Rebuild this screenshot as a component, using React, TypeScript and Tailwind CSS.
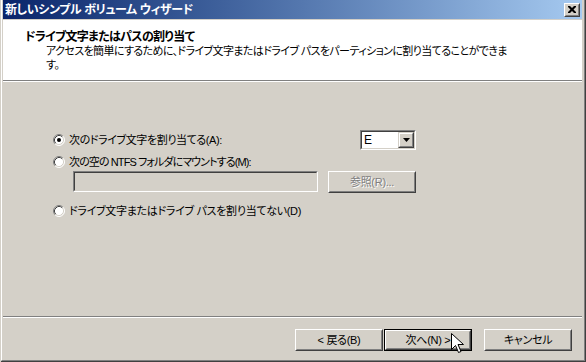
import React from "react";

const font = "font-['Liberation_Sans','Noto_Sans_CJK_JP',sans-serif] [font-feature-settings:'palt']";

function Radio({ checked }: { checked?: boolean }) {
  return (
    <svg width="12" height="12" viewBox="0 0 12 12" className="shrink-0">
      <circle cx="6" cy="6" r="5" fill="#fff" />
      <path d="M2.11 9.89 A5.5 5.5 0 0 1 9.89 2.11" fill="none" stroke="#808080" strokeWidth="1" />
      <path d="M9.89 2.11 A5.5 5.5 0 0 1 2.11 9.89" fill="none" stroke="#fff" strokeWidth="1" />
      <path d="M2.82 9.18 A4.5 4.5 0 0 1 9.18 2.82" fill="none" stroke="#404040" strokeWidth="1" />
      <path d="M9.18 2.82 A4.5 4.5 0 0 1 2.82 9.18" fill="none" stroke="#D4D0C8" strokeWidth="1" />
      {checked && <circle cx="6" cy="6" r="2" fill="#000" />}
    </svg>
  );
}

// classic raised button
function Button({ children, isDefault, disabled }: { children: React.ReactNode; isDefault?: boolean; disabled?: boolean }) {
  const inner = (
    <div className="h-full w-full border border-t-white border-l-white border-r-[#404040] border-b-[#404040]">
      <div className="flex h-full w-full items-center justify-center border border-t-[#D4D0C8] border-l-[#D4D0C8] border-r-[#808080] border-b-[#808080] bg-[#D4D0C8] text-[11px] leading-none tracking-[-0.3px]">
        {disabled ? (
          <span className="text-[#808080] [text-shadow:1px_1px_0_#fff]">{children}</span>
        ) : (
          <span className="text-black">{children}</span>
        )}
      </div>
    </div>
  );
  if (isDefault) {
    return <div className="h-[22px] w-[88px] border border-black">{inner}</div>;
  }
  return <div className="h-[22px] w-[88px]">{inner}</div>;
}

function Sunken({ className, children }: { className: string; children?: React.ReactNode }) {
  return (
    <div className={`border border-t-[#808080] border-l-[#808080] border-r-white border-b-white ${className}`}>
      <div className="h-full w-full border border-t-[#404040] border-l-[#404040] border-r-[#D4D0C8] border-b-[#D4D0C8]">
        {children}
      </div>
    </div>
  );
}

export default function App() {
  return (
    <div className={`relative h-[362px] w-[586px] overflow-hidden bg-[#D4D0C8] pl-px ${font} text-black`}>
      <div className="h-full w-full border-r border-b border-[#404040]">
        <div className="flex h-full w-full flex-col border-l border-l-white border-r border-b border-r-[#808080] border-b-[#808080] pl-px pr-[2px] pb-px">
          {/* title bar */}
          <div className="flex h-[19px] shrink-0 items-center justify-between bg-linear-to-r from-[#0A246A] to-[#A6CAF0] pl-[2px] pr-[2px]">
            <span className="text-[12px] font-bold leading-none tracking-[-0.4px] text-white">新しいシンプル ボリューム ウィザード</span>
            <div className="h-[14px] w-[16px] border border-t-white border-l-white border-r-[#404040] border-b-[#404040]">
              <div className="flex h-full w-full items-center justify-center border border-t-[#D4D0C8] border-l-[#D4D0C8] border-r-[#808080] border-b-[#808080] bg-[#D4D0C8]">
                <svg width="8" height="7" viewBox="0 0 8 7">
                  <path d="M0 0h2l2 2 2-2h2v1l-2.5 2.5L8 6v1H6L4 5 2 7H0V6l2.5-2.5L0 1z" fill="#000" />
                </svg>
              </div>
            </div>
          </div>
          <div className="h-px shrink-0 bg-[#D4D0C8]" />

          {/* header */}
          <div className="flex h-[60px] shrink-0 flex-col bg-white pl-[22px] pt-[10px]">
            <div className="text-[12px] font-bold leading-[14px] tracking-[-0.7px]">ドライブ文字またはパスの割り当て</div>
            <div className="whitespace-nowrap pl-[21px] text-[11px] leading-[14px] tracking-[-0.6px]">
              アクセスを簡単にするために、ドライブ文字またはドライブ パスをパーティションに割り当てることができま
              <br />
              す。
            </div>
          </div>
          <div className="h-px shrink-0 bg-[#808080]" />
          <div className="h-px shrink-0 bg-white" />

          {/* body */}
          <div className="flex h-[234px] shrink-0 flex-col pl-[50px] pt-[48px] text-[11px] leading-none tracking-[-0.3px]">
            <div className="flex h-[20px] w-[363px] items-center justify-between">
              <div className="flex items-center gap-[4px]">
                <Radio checked />
                <span className="tracking-[-0.4px]">次のドライブ文字を割り当てる(A):</span>
              </div>
              <Sunken className="h-[20px] w-[56px] bg-white">
                <div className="flex h-full w-full items-center justify-between bg-white pl-[2px]">
                  <span className="text-[12px]">E</span>
                  <div className="h-[16px] w-[16px] border border-t-[#D4D0C8] border-l-[#D4D0C8] border-r-[#404040] border-b-[#404040]">
                    <div className="flex h-full w-full items-center justify-center border border-t-white border-l-white border-r-[#808080] border-b-[#808080] bg-[#D4D0C8]">
                      <svg width="7" height="4" viewBox="0 0 7 4">
                        <path d="M0 0h7L3.5 4z" fill="#000" />
                      </svg>
                    </div>
                  </div>
                </div>
              </Sunken>
            </div>
            <div className="mt-[4px] flex h-[16px] items-center gap-[4px]">
              <Radio />
              <span className="tracking-[-0.9px]">次の空の&nbsp;NTFS フォルダにマウントする(M):</span>
            </div>
            <div className="mt-px flex w-[363px] items-start justify-between pl-[20px]">
              <Sunken className="h-[21px] w-[245px] bg-[#D4D0C8]" />
              <Button disabled>参照(R)...</Button>
            </div>
            <div className="mt-[10px] flex h-[16px] items-center gap-[4px]">
              <Radio />
              <span>ドライブ文字またはドライブ パスを割り当てない(D)</span>
            </div>
          </div>
          <div className="h-px shrink-0 bg-[#808080]" />
          <div className="h-px shrink-0 bg-white" />

          {/* footer buttons */}
          <div className="flex flex-1 items-start justify-end pr-[10px] pt-[11px]">
            <div className="flex">
              <Button>&lt; 戻る(B)</Button>
              <div className="ml-px">
                <Button isDefault>次へ(N) &gt;</Button>
              </div>
              <div className="ml-[12px]">
                <Button>キャンセル</Button>
              </div>
            </div>
          </div>
        </div>
      </div>

      {/* mouse pointer */}
      <svg className="absolute left-[451px] top-[333px]" width="13" height="21" viewBox="0 0 13 21">
        <path d="M0.5 0.5V16.5L4.5 12.5L7.5 19.5L10 18.5L7 11.5H12.5Z" fill="#fff" stroke="#000" strokeWidth="1" strokeLinejoin="miter" />
      </svg>
    </div>
  );
}
